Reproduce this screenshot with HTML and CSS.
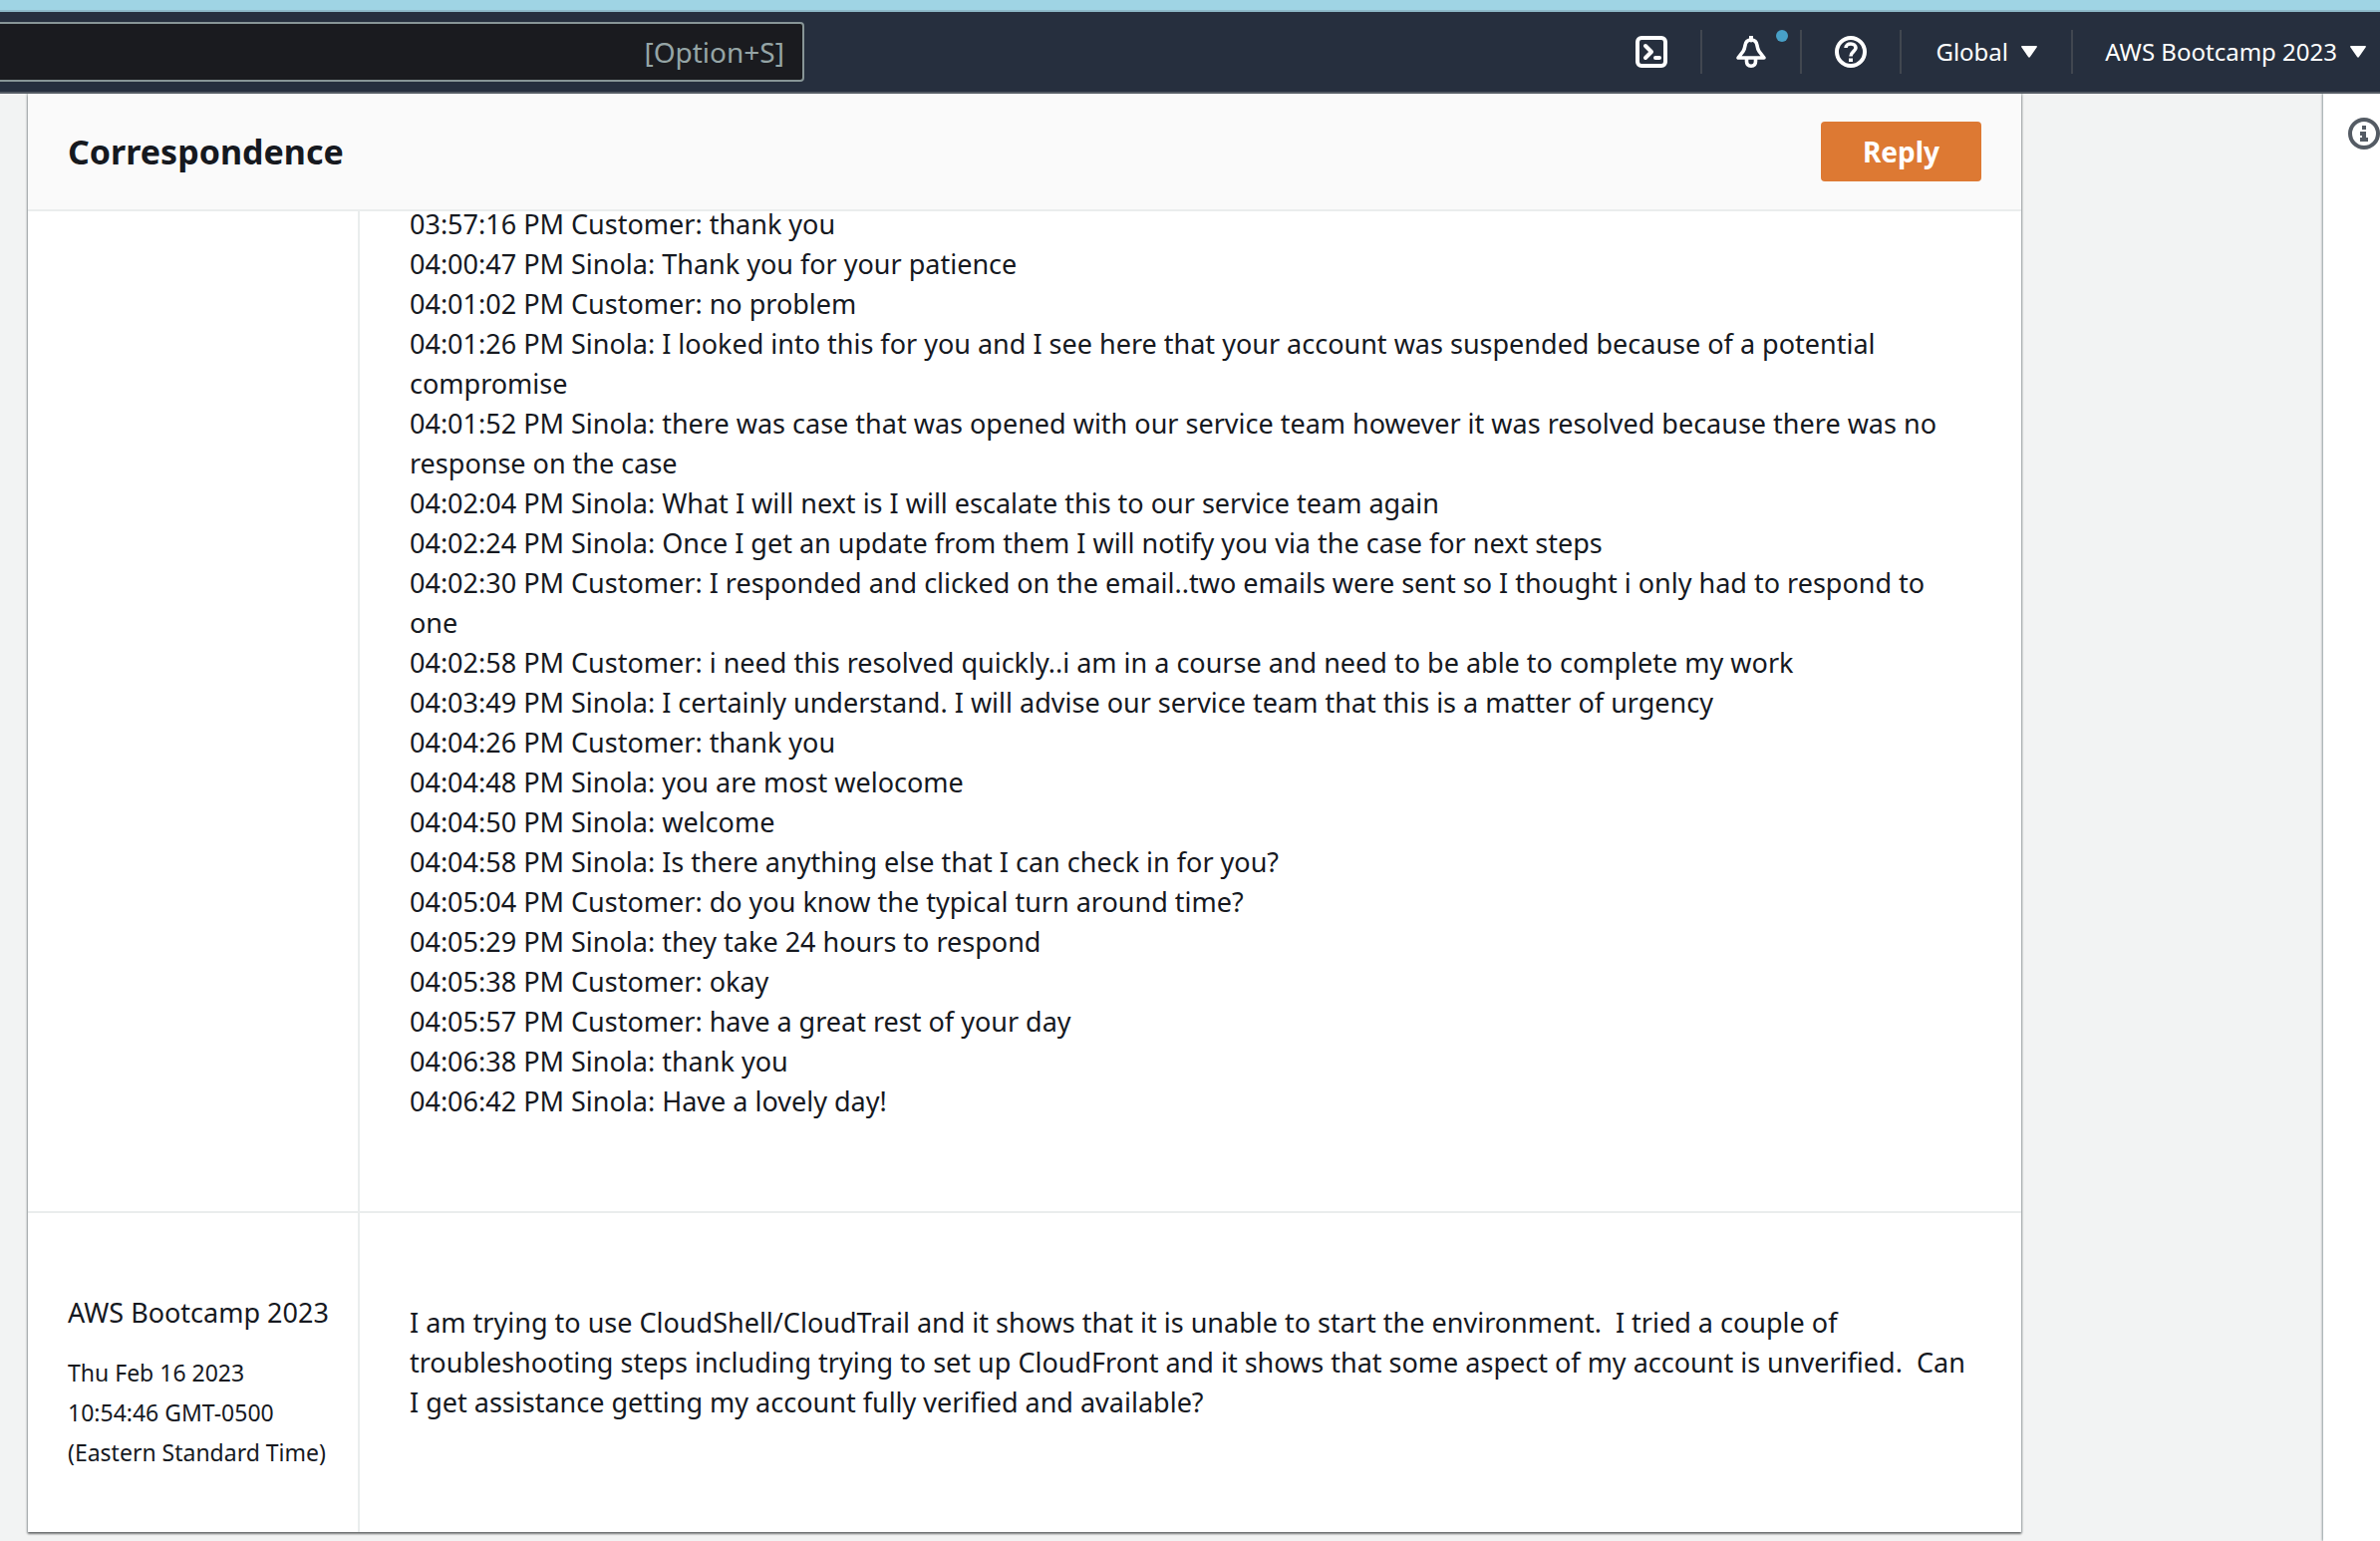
FILE: index.html
```html
<!DOCTYPE html>
<html lang="en">
<head>
<meta charset="utf-8">
<title>Correspondence</title>
<link rel="stylesheet" href="styles.css">
</head>
<body>
<header class="top">
  <form class="search" role="search">
    <input class="search-input" type="text" aria-label="Search" placeholder="[Option+S]">
  </form>
  <nav class="tools" aria-label="Console tools">
    <button class="tool" type="button" aria-label="CloudShell">
      <svg class="icon" viewBox="0 0 32 32"><rect x="2" y="2" width="28" height="28" rx="4"/><path d="M10 10l6 6-6 6" stroke-linejoin="round" stroke-linecap="round"/><path d="M20 22h4" stroke-linecap="round"/></svg>
    </button>
    <button class="tool" type="button" aria-label="Notifications">
      <svg class="icon" viewBox="0 0 32 32"><path d="M16 .5v4" stroke-linecap="round"/><path d="M3 22h26L24 15.500c-1.200-1.600-1.600-3.500-2-6C21.500 6 19.500 4 16 4s-5.500 2-6 5.500c-.4 2.500-.8 4.400-2 6L3 22z" stroke-width="3.600" stroke-linejoin="round"/><path d="M11.500 23v2.500c0 3 1.800 4.700 4.500 4.700s4.500-1.700 4.500-4.700V23" stroke-width="3.600"/></svg>
      <span class="dot"></span>
    </button>
    <button class="tool" type="button" aria-label="Help">
      <svg class="icon" viewBox="0 0 32 32"><circle cx="16" cy="16" r="14"/><path d="M11 12c0-2.500 2-4 5-4s5 1.700 5 4c0 3.500-5 4-5 8.500" stroke-width="3.600"/><path d="M16 22.500v3.500"/></svg>
    </button>
    <button class="tool region" type="button">Global <svg class="caret" viewBox="0 0 16 12"><path d="M1 0h14q1.500 0 .6 1.500L9 11q-1 1.500-2 0L.4 1.500Q-.5 0 1 0z"/></svg></button>
    <button class="tool account" type="button">AWS Bootcamp 2023 <svg class="caret" viewBox="0 0 16 12"><path d="M1 0h14q1.500 0 .6 1.500L9 11q-1 1.500-2 0L.4 1.500Q-.5 0 1 0z"/></svg></button>
  </nav>
</header>
<div class="page">
  <main class="content">
    <section class="panel">
      <header class="panel-head">
        <h2 class="title">Correspondence</h2>
        <button class="reply" type="button">Reply</button>
      </header>
      <article class="row">
        <div class="meta"></div>
        <div class="message transcript">
          <p>03:57:16 PM Customer: thank you</p>
          <p>04:00:47 PM Sinola: Thank you for your patience</p>
          <p>04:01:02 PM Customer: no problem</p>
          <p>04:01:26 PM Sinola: I looked into this for you and I see here that your account was suspended because of a potential compromise</p>
          <p>04:01:52 PM Sinola: there was case that was opened with our service team however it was resolved because there was no response on the case</p>
          <p>04:02:04 PM Sinola: What I will next is I will escalate this to our service team again</p>
          <p>04:02:24 PM Sinola: Once I get an update from them I will notify you via the case for next steps</p>
          <p>04:02:30 PM Customer: I responded and clicked on the email..two emails were sent so I thought i only had to respond to one</p>
          <p>04:02:58 PM Customer: i need this resolved quickly..i am in a course and need to be able to complete my work</p>
          <p>04:03:49 PM Sinola: I certainly understand. I will advise our service team that this is a matter of urgency</p>
          <p>04:04:26 PM Customer: thank you</p>
          <p>04:04:48 PM Sinola: you are most welocome</p>
          <p>04:04:50 PM Sinola: welcome</p>
          <p>04:04:58 PM Sinola: Is there anything else that I can check in for you?</p>
          <p>04:05:04 PM Customer: do you know the typical turn around time?</p>
          <p>04:05:29 PM Sinola: they take 24 hours to respond</p>
          <p>04:05:38 PM Customer: okay</p>
          <p>04:05:57 PM Customer: have a great rest of your day</p>
          <p>04:06:38 PM Sinola: thank you</p>
          <p>04:06:42 PM Sinola: Have a lovely day!</p>
        </div>
      </article>
      <article class="row">
        <div class="meta">
          <p class="author">AWS Bootcamp 2023</p>
          <p class="date">Thu Feb 16 2023 10:54:46 GMT-0500 (Eastern Standard Time)</p>
        </div>
        <div class="message">
          <p>I am trying to use CloudShell/CloudTrail and it shows that it is unable to start the environment.&nbsp; I tried a couple of troubleshooting steps including trying to set up CloudFront and it shows that some aspect of my account is unverified.&nbsp; Can I get assistance getting my account fully verified and available?</p>
        </div>
      </article>
    </section>
  </main>
  <aside class="side">
    <button class="info" type="button" aria-label="Info">
      <svg class="icon" viewBox="0 0 32 32"><circle cx="16" cy="16" r="14"/><path d="M14 8h4v4h-4zM12 14h6v6h2v4h-8v-4h2v-2h-2z" fill="currentColor" stroke="none"/></svg>
    </button>
  </aside>
</div>
</body>
</html>
```
FILE: styles.css
```css
* { box-sizing: border-box; }
html, body { height: 100%; }
body {
  margin: 0;
  display: flex;
  flex-direction: column;
  overflow: hidden;
  background: #f2f3f3;
  color: #16191f;
  font: 27px/40px "Noto Sans", "Open Sans", sans-serif;
}
p, h2 { margin: 0; }
button { margin: 0; padding: 0; border: 0; background: none; font: inherit; color: inherit; }

.top {
  position: relative;
  z-index: 2;
  flex: none;
  display: flex;
  justify-content: space-between;
  align-items: center;
  height: 94px;
  background: #262f3e;
  border-top: 12px solid #9fd4e4;
  border-bottom: 2px solid #545b64;
}
.top::before {
  content: "";
  position: absolute;
  top: -2px;
  left: 0;
  right: 0;
  height: 2px;
  background: #8cb8c7;
}
.search { width: 34%; margin-left: -5px; }
.search-input {
  display: block;
  width: 100%;
  height: 60px;
  padding: 0 18px;
  border: 2px solid #879596;
  border-radius: 4px;
  background: #1a1b1f;
  color: #fff;
  font: inherit;
  font-size: 28px;
  text-align: right;
}
.search-input::placeholder { color: #95a5a6; opacity: 1; }

.tools { display: flex; align-items: center; color: #fff; font-size: 24px; }
.tool {
  position: relative;
  display: flex;
  justify-content: center;
  align-items: center;
  gap: 13px;
  width: 100px;
  height: 44px;
  border-right: 2px solid #414750;
}
.region { width: 172px; }
.account { width: auto; padding: 0 14px 0 32px; border-right: 0; }
.icon { display: block; width: 32px; height: 32px; fill: none; stroke: currentColor; stroke-width: 4; }
.caret { width: 16px; height: 12px; fill: currentColor; }
.dot {
  position: absolute;
  top: 0;
  right: 12px;
  width: 12px;
  height: 12px;
  border-radius: 50%;
  background: #48a0c7;
}

.page { flex: 1; display: flex; min-height: 0; }
.content { flex: 1; padding: 0 303px 0 28px; }
.panel { background: #fff; box-shadow: 0 2px 2px #0007, 0 0 2px 1px #001c2440; }
.panel-head {
  position: relative;
  z-index: 1;
  display: flex;
  justify-content: space-between;
  align-items: center;
  padding: 28px 40px;
  background: #fafafa;
  border-bottom: 2px solid #eaeded;
}
.title { font-size: 34px; font-weight: 700; }
.reply {
  width: 161px;
  height: 60px;
  border-radius: 4px;
  background: #dd7933;
  color: #fff;
  font-size: 28px;
  font-weight: 700;
}
.row { display: grid; grid-template-columns: 333px 1fr; border-bottom: 2px solid #eaeded; }
.row:last-child { border-bottom: 0; }
.meta { padding: 80px 20px 60px 40px; border-right: 2px solid #eaeded; }
.author { margin-bottom: 20px; white-space: nowrap; }
.date { font-size: 23px; }
.message { padding: 90px 48px 90px 50px; }
.transcript { margin-top: -7px; padding-top: 0; }

.side {
  flex: none;
  width: 57px;
  padding: 24px 0 0 25px;
  background: #fff;
  color: #545b64;
  box-shadow: -1px 0 2px #001c2466;
}
```
